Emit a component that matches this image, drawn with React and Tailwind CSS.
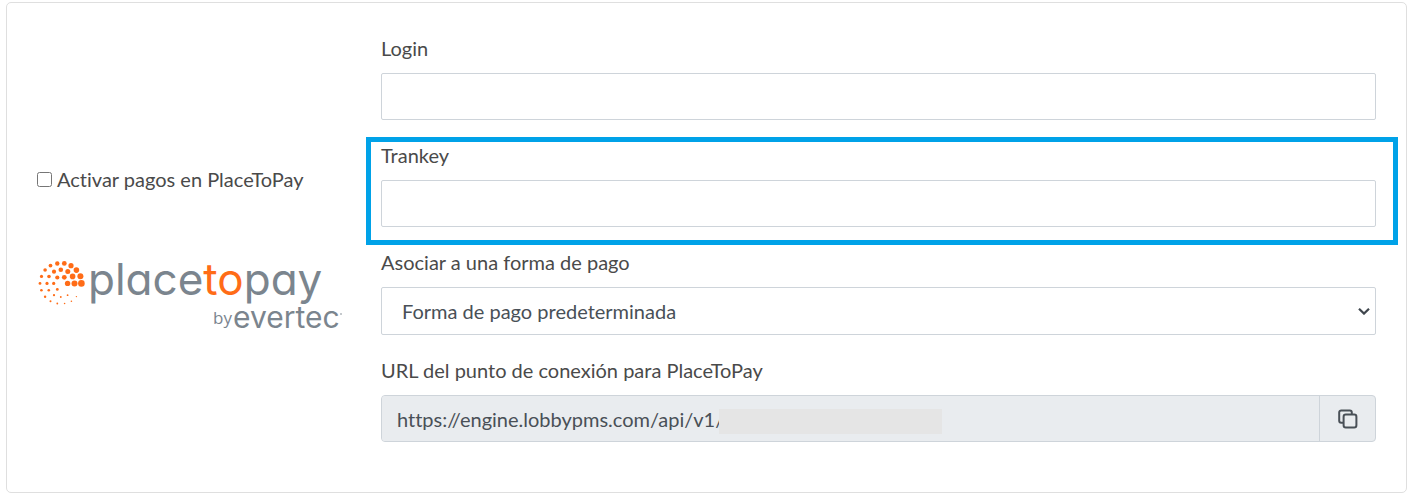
import React from 'react';

const DOTS = [
  [57.3, 263.5, 2.2], [64.3, 263.4, 2.4], [50.5, 265.6, 1.9], [71, 265.7, 2.6],
  [76.4, 270.1, 2.8], [45.1, 270, 1.8], [60.8, 269.7, 2.3], [67.8, 271.6, 2.5],
  [54, 271.7, 2.1], [80.4, 276.2, 3], [72.6, 276.4, 2.8], [64.3, 277.3, 2.4],
  [57.3, 277.5, 2.1], [49, 276.5, 1.8], [41.5, 276.4, 1.6], [81.4, 283.4, 3.3],
  [74.5, 283.4, 3], [67.6, 283.4, 2.7], [53.7, 283.4, 1.6], [47, 283.4, 1.6],
  [40, 283.4, 1.4], [57.3, 289.4, 1.4], [48.8, 290.3, 1.3], [41.4, 290.3, 1.3],
  [67.6, 295.2, 0.9], [76.4, 296.6, 0.7], [60.8, 297, 0.9], [54, 295.2, 1.1],
  [45.1, 296.7, 1.2], [71.4, 301.2, 0.8], [50.5, 301.3, 1], [57.3, 303.5, 0.9],
  [64.6, 303.5, 0.8],
];

function Logo() {
  return (
    <svg
      viewBox="37 245 310 90"
      className="block h-[90px] w-[310px] max-w-none [font-feature-settings:'cv11']"
      role="img"
      aria-label="placetopay by evertec"
      fontFamily="Inter, sans-serif"
    >
      <g fill="#ff6c17">
        {DOTS.map(([x, y, r]) => (
          <circle key={`${x}-${y}`} cx={x} cy={y} r={r} />
        ))}
      </g>
      <text x="88" y="295" fontSize="44" fill="#7b858e">
        place<tspan fill="#ff6c17">to</tspan>pay
      </text>
      <text x="213" y="324" fontSize="17" fontFamily="Open Sans, sans-serif" fill="#7b858e">by</text>
      <text x="233" y="328" fontSize="30" fill="#7b858e">evertec</text>
      <circle cx="341" cy="314" r="0.8" fill="#7b858e" />
    </svg>
  );
}

function Field({ id, label, highlighted, children }) {
  return (
    <div className="relative">
      <label htmlFor={id} className="mb-[10px] block w-fit">{label}</label>
      {children}
      {highlighted && (
        <div className="pointer-events-none absolute -top-[3px] -right-[22px] -bottom-[18px] -left-[15px] border-5 border-[#00a2e8]" />
      )}
    </div>
  );
}

const control =
  'block w-full rounded-xs border border-[#ced4da] bg-white text-[#495057]';

export default function App() {
  return (
    <main className="bg-white pt-[2px] pr-[3px] pb-[3px] pl-[6px] font-[Lato,sans-serif] text-[20px] leading-[30px] text-[#4a4a4a] [font-variant-ligatures:none]">
      <form className="grid grid-cols-[314px_minmax(0,1fr)] gap-[30px] rounded-[5px] border border-[#dfdfdf] px-[30px] pt-[30px] pb-[50px]">
        <div className="pt-[131px]">
          <label htmlFor="enable" className="flex items-center gap-[5px]">
            <input id="enable" type="checkbox" className="h-[15px] w-[15px]" />
            Activar pagos en PlaceToPay
          </label>
          <div className="mt-[51px]">
            <Logo />
          </div>
        </div>

        <div className="flex flex-col gap-5">
          <Field id="login" label="Login">
            <input id="login" type="text" className={`${control} h-[47px] px-4`} />
          </Field>
          <Field id="trankey" label="Trankey" highlighted>
            <input id="trankey" type="text" className={`${control} h-[47px] px-4`} />
          </Field>
          <Field id="method" label="Asociar a una forma de pago">
            <div className="relative">
              <select id="method" className={`${control} h-12 appearance-none pr-8 pl-5`}>
                <option>Forma de pago predeterminada</option>
              </select>
              <svg
                viewBox="0 0 12 8"
                className="pointer-events-none absolute top-5 right-[6px] h-2 w-3"
                fill="none"
                stroke="#3f464d"
                strokeWidth="2.2"
              >
                <path d="M1 1.8 6 6.6 11 1.8" />
              </svg>
            </div>
          </Field>
          <Field id="url" label="URL del punto de conexión para PlaceToPay">
            <div className="relative flex h-[47px] overflow-hidden rounded-[4px] border border-[#ced4da] bg-[#e9ecef]">
              <input
                id="url"
                type="text"
                readOnly
                value="https://engine.lobbypms.com/api/v1/"
                className="min-w-0 flex-1 bg-[#e9ecef] px-[15px] text-[#495057]"
              />
              <div className="absolute top-[13px] left-[337px] h-[25px] w-[223px] bg-[#e5e5e5]" />
              <button
                type="button"
                aria-label="Copiar"
                className="flex w-14 items-center justify-center border-l border-[#ced4da]"
              >
                <svg viewBox="0 0 20 20" className="h-5 w-5" fill="none" stroke="#495057" strokeWidth="2" strokeLinejoin="round">
                  <rect x="5.6" y="5.6" width="12.8" height="12.8" rx="2.2" />
                  <path d="M5.6 13.8H3.2a2 2 0 0 1-2-2V3.4a2 2 0 0 1 2-2h8.6a2 2 0 0 1 2 2v2.2" />
                </svg>
              </button>
            </div>
          </Field>
        </div>
      </form>
    </main>
  );
}
